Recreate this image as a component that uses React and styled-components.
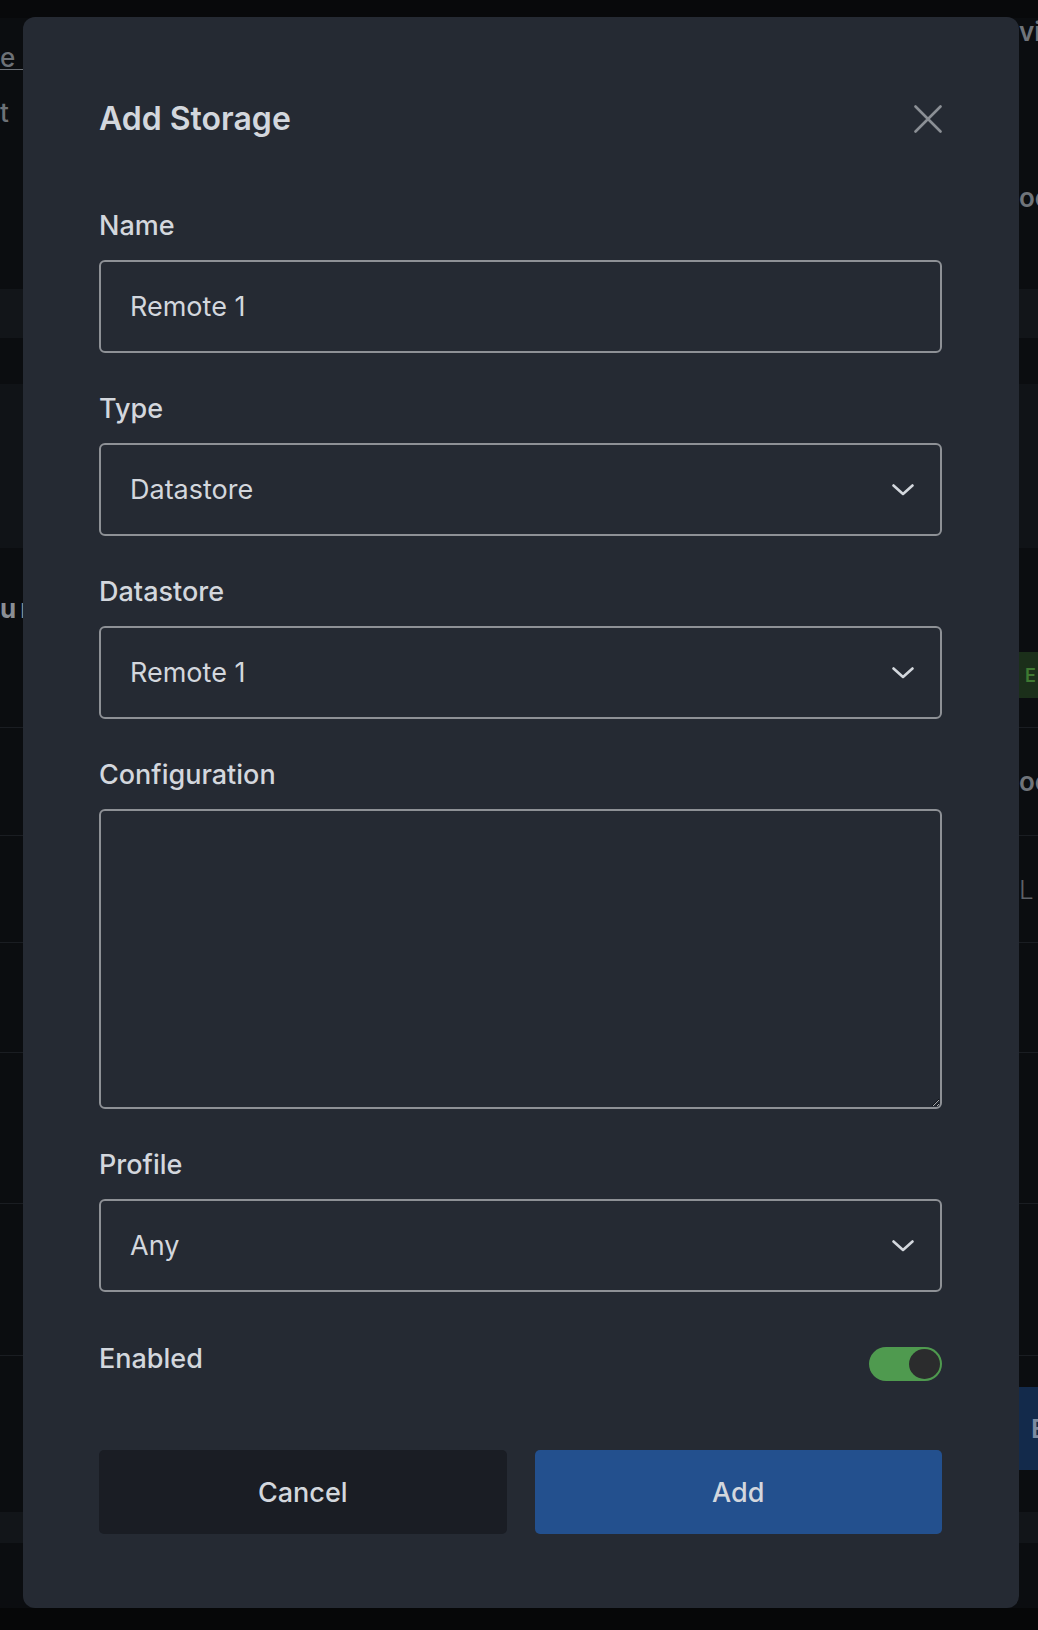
import React, { useState } from 'react';
import styled, { createGlobalStyle } from 'styled-components';

const GlobalStyle = createGlobalStyle`
  html, body {
    margin: 0;
    background: #0b0d10;
    font-family: Inter, "Noto Sans", "Liberation Sans", sans-serif;
  }
  * { box-sizing: border-box; }
`;

// rows of the page that sits dimmed behind the dialog
const backdropRows = [
  { h: 18, bg: '#08090b' },
  { h: 26, right: 'vi' },
  { h: 26, left: 'e S', link: true },
  { h: 29 },
  { h: 26, left: 't C' },
  { h: 54 },
  { h: 36, right: 'oo' },
  { h: 74 },
  { h: 49, bg: '#121519' },
  { h: 46 },
  { h: 164, bg: '#101317' },
  { h: 40 },
  { h: 40, left: 'ur', bold: true },
  { h: 24 },
  { h: 46, badge: 'EN' },
  { h: 30, line: true },
  { h: 108, right: 'oo', line: true },
  { h: 107, right: 'L', thin: true, line: true },
  { h: 110, line: true },
  { h: 151, line: true },
  { h: 152, line: true },
  { h: 31 },
  { h: 83, button: 'E' },
  { h: 42 },
  { h: 31, bg: '#121519' },
  { h: 65 },
  { h: 22, bg: '#060708' },
];

const ChevronDown = () => (
  <svg width="22" height="12" viewBox="0 0 22 12" fill="none">
    <polyline points="1.5,1.5 11,10 20.5,1.5" stroke="#d3d7dd" strokeWidth="2.6" strokeLinecap="round" strokeLinejoin="round" />
  </svg>
);

const CloseIcon = () => (
  <svg width="28" height="28" viewBox="0 0 28 28" fill="none">
    <path d="M1.5 1.5 L26.5 26.5 M26.5 1.5 L1.5 26.5" stroke="#8b8f95" strokeWidth="2.6" strokeLinecap="round" />
  </svg>
);

const App = () => {
  const [enabled, setEnabled] = useState(true);

  return (
    <Screen>
      <GlobalStyle />
      <Backdrop>
        {backdropRows.map((r, i) => (
          <BackRow key={i} h={r.h} bg={r.bg} line={r.line}>
            <BackLeft link={r.link} bold={r.bold}>{r.left}</BackLeft>
            <BackRight thin={r.thin}>
              {r.right}
              {r.badge && <Badge>{r.badge}</Badge>}
              {r.button && <GhostButton>{r.button}</GhostButton>}
            </BackRight>
          </BackRow>
        ))}
      </Backdrop>

      <Modal>
        <Header>
          <Title>Add Storage</Title>
          <CloseButton aria-label="Close">
            <CloseIcon />
          </CloseButton>
        </Header>

        <Body>
          <Field>
            <Label>Name</Label>
            <Input defaultValue="Remote 1" />
          </Field>

          <Field>
            <Label>Type</Label>
            <SelectBox>
              <span>Datastore</span>
              <ChevronDown />
            </SelectBox>
          </Field>

          <Field>
            <Label>Datastore</Label>
            <SelectBox>
              <span>Remote 1</span>
              <ChevronDown />
            </SelectBox>
          </Field>

          <Field>
            <Label>Configuration</Label>
            <TextArea />
          </Field>

          <Field>
            <Label>Profile</Label>
            <SelectBox>
              <span>Any</span>
              <ChevronDown />
            </SelectBox>
          </Field>

          <ToggleRow>
            <Label as="span">Enabled</Label>
            <Toggle on={enabled} onClick={() => setEnabled(!enabled)}>
              <Knob />
            </Toggle>
          </ToggleRow>

          <Actions>
            <Button>Cancel</Button>
            <Button primary>Add</Button>
          </Actions>
        </Body>
      </Modal>
    </Screen>
  );
};

const Screen = styled.div`
  position: relative;
  width: 1038px;
  height: 1630px;
  overflow: hidden;
`;

const Backdrop = styled.div`
  display: flex;
  flex-direction: column;
`;

const BackRow = styled.div`
  display: grid;
  grid-template-columns: 1fr 19px;
  align-items: center;
  height: ${(p) => p.h}px;
  background: ${(p) => p.bg || '#0b0d10'};
  border-bottom: ${(p) => (p.line ? '1px solid #1a1d22' : 'none')};
  color: #6d7177;
  font-size: 26px;
`;

const BackLeft = styled.div`
  white-space: nowrap;
  overflow: hidden;
  font-weight: ${(p) => (p.bold ? 700 : 500)};
  color: ${(p) => (p.bold ? '#8a8e94' : '#6d7177')};
  text-decoration: ${(p) => (p.link ? 'underline' : 'none')};
  letter-spacing: 4px;
`;

const BackRight = styled.div`
  white-space: nowrap;
  overflow: hidden;
  height: 100%;
  display: flex;
  align-items: center;
  font-weight: ${(p) => (p.thin ? 300 : 600)};
  color: ${(p) => (p.thin ? '#5d6167' : '#70747a')};
`;

const Badge = styled.span`
  display: flex;
  align-items: center;
  height: 100%;
  padding-left: 6px;
  background: #1b2f1a;
  color: #3f7a32;
  font-size: 18px;
  letter-spacing: 3px;
`;

const GhostButton = styled.span`
  display: flex;
  align-items: center;
  height: 100%;
  padding-left: 12px;
  background: #132a4b;
  color: #7e8ba0;
  font-weight: 600;
`;

const Modal = styled.div`
  position: absolute;
  top: 17px;
  left: 23px;
  width: 996px;
  padding: 80px 77px 74px 76px;
  background: #252a33;
  border-radius: 12px;
  color: #d3d7dd;
`;

const Header = styled.div`
  display: flex;
  align-items: center;
  justify-content: space-between;
  margin-bottom: 67px;
`;

const Title = styled.h2`
  margin: 0;
  font-size: 32px;
  line-height: 44px;
  font-weight: 600;
  color: #d3d7dd;
`;

const CloseButton = styled.button`
  display: flex;
  padding: 0;
  border: none;
  background: none;
  cursor: pointer;
`;

const Body = styled.div`
  display: flex;
  flex-direction: column;
  gap: 38px;
`;

const Field = styled.div`
  display: flex;
  flex-direction: column;
`;

const Label = styled.label`
  font-size: 27px;
  line-height: 36px;
  font-weight: 500;
  color: #d3d7dd;
  margin-bottom: 16px;
`;

const Input = styled.input`
  height: 93px;
  padding: 0 29px;
  border: 2px solid #8e9196;
  border-radius: 6px;
  background: transparent;
  color: #d3d7dd;
  font-family: inherit;
  font-size: 27px;
  outline: none;
`;

const SelectBox = styled.div`
  display: flex;
  align-items: center;
  justify-content: space-between;
  height: 93px;
  padding: 0 26px 0 29px;
  border: 2px solid #8e9196;
  border-radius: 6px;
  font-size: 27px;
  color: #d3d7dd;
  cursor: pointer;
`;

const TextArea = styled.textarea`
  height: 300px;
  padding: 20px 29px;
  border: 2px solid #8e9196;
  border-radius: 6px;
  background: transparent;
  color: #d3d7dd;
  font-family: inherit;
  font-size: 27px;
  resize: vertical;
  outline: none;
  color-scheme: dark;
`;

const ToggleRow = styled.div`
  display: flex;
  justify-content: space-between;
  align-items: flex-start;
  margin-top: 11px;

  ${Label} {
    margin-bottom: 0;
  }
`;

const Toggle = styled.button`
  display: flex;
  align-items: center;
  justify-content: ${(p) => (p.on ? 'flex-end' : 'flex-start')};
  width: 73px;
  height: 34px;
  margin-top: 6px;
  padding: 0 2px;
  border: none;
  border-radius: 17px;
  background: ${(p) => (p.on ? '#4f9a4f' : '#555a62')};
  cursor: pointer;
`;

const Knob = styled.span`
  width: 31px;
  height: 30px;
  border-radius: 50%;
  background: #2b2c2d;
`;

const Actions = styled.div`
  display: grid;
  grid-template-columns: 1fr 1fr;
  gap: 28px;
  margin-top: 31px;
`;

const Button = styled.button`
  height: 84px;
  border: none;
  border-radius: 5px;
  background: ${(p) => (p.primary ? '#23508e' : '#1a1d24')};
  color: #d3d7dd;
  font-family: inherit;
  font-size: 27px;
  font-weight: 500;
  cursor: pointer;
`;

export default App;
